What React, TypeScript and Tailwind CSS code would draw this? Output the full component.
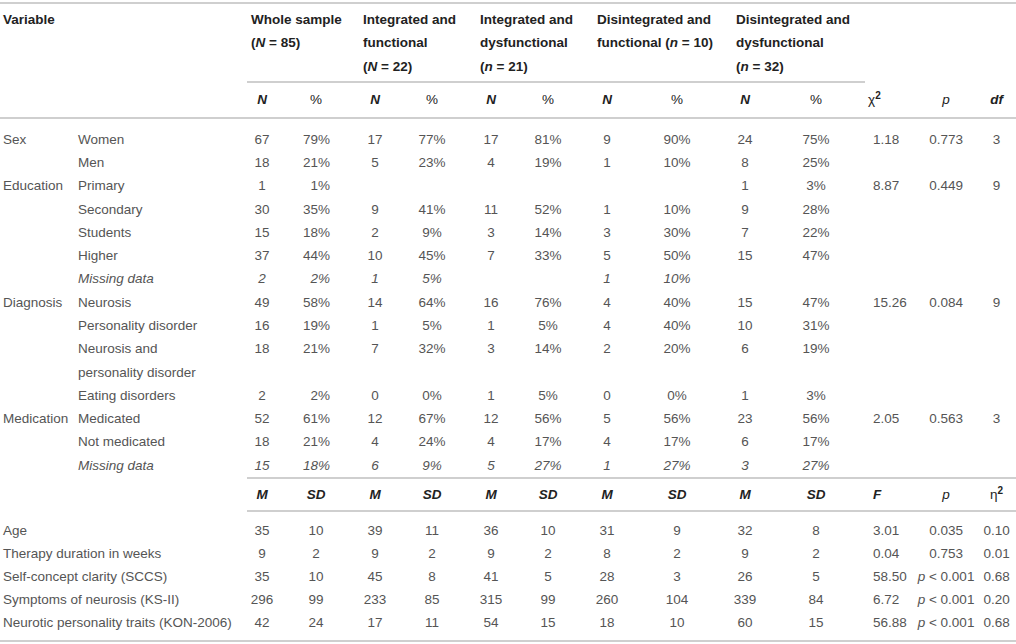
import React from "react";

type UpperRow = {
  group?: string;
  label: React.ReactNode;
  vals: string[];
  stats?: [string, string, string];
  italic?: boolean;
};

type LowerRow = {
  label: string;
  vals: string[];
  stats: [string, string, string];
};

const LT = "lt";

const upperRows: UpperRow[] = [
  { group: "Sex", label: "Women", vals: ["67", "79%", "17", "77%", "17", "81%", "9", "90%", "24", "75%"], stats: ["1.18", "0.773", "3"] },
  { label: "Men", vals: ["18", "21%", "5", "23%", "4", "19%", "1", "10%", "8", "25%"] },
  { group: "Education", label: "Primary", vals: ["1", "1%", "", "", "", "", "", "", "1", "3%"], stats: ["8.87", "0.449", "9"] },
  { label: "Secondary", vals: ["30", "35%", "9", "41%", "11", "52%", "1", "10%", "9", "28%"] },
  { label: "Students", vals: ["15", "18%", "2", "9%", "3", "14%", "3", "30%", "7", "22%"] },
  { label: "Higher", vals: ["37", "44%", "10", "45%", "7", "33%", "5", "50%", "15", "47%"] },
  { label: "Missing data", italic: true, vals: ["2", "2%", "1", "5%", "", "", "1", "10%", "", ""] },
  { group: "Diagnosis", label: "Neurosis", vals: ["49", "58%", "14", "64%", "16", "76%", "4", "40%", "15", "47%"], stats: ["15.26", "0.084", "9"] },
  { label: "Personality disorder", vals: ["16", "19%", "1", "5%", "1", "5%", "4", "40%", "10", "31%"] },
  {
    label: (
      <>
        Neurosis and
        <br />
        personality disorder
      </>
    ),
    vals: ["18", "21%", "7", "32%", "3", "14%", "2", "20%", "6", "19%"],
  },
  { label: "Eating disorders", vals: ["2", "2%", "0", "0%", "1", "5%", "0", "0%", "1", "3%"] },
  { group: "Medication", label: "Medicated", vals: ["52", "61%", "12", "67%", "12", "56%", "5", "56%", "23", "56%"], stats: ["2.05", "0.563", "3"] },
  { label: "Not medicated", vals: ["18", "21%", "4", "24%", "4", "17%", "4", "17%", "6", "17%"] },
  { label: "Missing data", italic: true, vals: ["15", "18%", "6", "9%", "5", "27%", "1", "27%", "3", "27%"] },
];

const lowerRows: LowerRow[] = [
  { label: "Age", vals: ["35", "10", "39", "11", "36", "10", "31", "9", "32", "8"], stats: ["3.01", "0.035", "0.10"] },
  { label: "Therapy duration in weeks", vals: ["9", "2", "9", "2", "9", "2", "8", "2", "9", "2"], stats: ["0.04", "0.753", "0.01"] },
  { label: "Self-concept clarity (SCCS)", vals: ["35", "10", "45", "8", "41", "5", "28", "3", "26", "5"], stats: ["58.50", LT, "0.68"] },
  { label: "Symptoms of neurosis (KS-II)", vals: ["296", "99", "233", "85", "315", "99", "260", "104", "339", "84"], stats: ["6.72", LT, "0.20"] },
  { label: "Neurotic personality traits (KON-2006)", vals: ["42", "24", "17", "11", "54", "15", "18", "10", "60", "15"], stats: ["56.88", LT, "0.68"] },
];

const colWidths = [75, 172, 30, 78, 40, 74, 44, 70, 48, 92, 44, 98, 50, 62, 39];

const rule = "border-[#cfcfcf]";

function PValue({ v }: { v: string }) {
  if (v === LT) {
    return (
      <>
        <i>p</i> &lt; 0.001
      </>
    );
  }
  return <>{v}</>;
}

export default function App() {
  return (
    <div className="min-h-screen bg-white pt-[2px] font-['Liberation_Sans',Arial,sans-serif] text-[13.5px] text-[#555]">
      <div className={`border-t-2 ${rule}`}>
        <table className="w-[1016px] table-fixed border-separate border-spacing-0">
          <colgroup>
            {colWidths.map((w, i) => (
              <col key={i} style={{ width: w }} />
            ))}
          </colgroup>
          <thead className="font-bold text-[#222]">
            {/* Group headings */}
            <tr className="leading-[23.4px]">
              <th colSpan={2} className="pl-[3px] pt-1 pb-[3px] text-left align-top">
                Variable
              </th>
              <th colSpan={2} className={`border-b-2 ${rule} pl-[4px] pt-1 pb-[3px] text-left align-top whitespace-nowrap`}>
                Whole sample
                <br />(<i>N</i> = 85)
              </th>
              <th colSpan={2} className={`border-b-2 ${rule} pl-[8px] pt-1 pb-[3px] text-left align-top whitespace-nowrap`}>
                Integrated and
                <br />
                functional
                <br />(<i>N</i> = 22)
              </th>
              <th colSpan={2} className={`border-b-2 ${rule} pl-[11px] pt-1 pb-[3px] text-left align-top whitespace-nowrap`}>
                Integrated and
                <br />
                dysfunctional
                <br />(<i>n</i> = 21)
              </th>
              <th colSpan={2} className={`border-b-2 ${rule} pl-[14px] pt-1 pb-[3px] text-left align-top whitespace-nowrap`}>
                Disintegrated and
                <br />
                functional (<i>n</i> = 10)
              </th>
              <th colSpan={2} className={`border-b-2 ${rule} pl-[13px] pt-1 pb-[3px] text-left align-top whitespace-nowrap`}>
                Disintegrated and
                <br />
                dysfunctional
                <br />(<i>n</i> = 32)
              </th>
              <th colSpan={3} />
            </tr>
            {/* N / % */}
            <tr className="leading-[23.4px]">
              <th colSpan={2} className={`border-b-2 ${rule} py-[5px]`} />
              {Array.from({ length: 5 }).map((_, i) => (
                <React.Fragment key={i}>
                  <th className={`border-b-2 ${rule} py-[5px] text-center italic`}>N</th>
                  <th className={`border-b-2 ${rule} py-[5px] text-center font-normal`}>%</th>
                </React.Fragment>
              ))}
              <th className={`border-b-2 ${rule} py-[5px] pl-[3px] text-left font-normal`}>
                χ<sup className="font-bold text-[10px]">2</sup>
              </th>
              <th className={`border-b-2 ${rule} py-[5px] text-center font-normal italic`}>p</th>
              <th className={`border-b-2 ${rule} py-[5px] text-center italic`}>df</th>
            </tr>
          </thead>
          <tbody className="leading-[23.3px]">
            {upperRows.map((r, ri) => {
              const pad = ri === 0 ? "pt-[9px]" : "";
              return (
                <tr key={ri} className={r.italic ? "italic" : ""}>
                  <td className={`pl-[3px] text-left align-top not-italic ${pad}`}>{r.group}</td>
                  <td className={`pl-[3px] text-left align-top ${pad}`}>{r.label}</td>
                  {r.vals.map((v, vi) => (
                    <td
                      key={vi}
                      className={`align-top ${pad} ${vi === 1 ? "pr-[25px] text-right" : "text-center"}`}
                    >
                      {v}
                    </td>
                  ))}
                  <td className={`pl-[8px] text-left align-top ${pad}`}>{r.stats?.[0]}</td>
                  <td className={`text-center align-top ${pad}`}>{r.stats?.[1]}</td>
                  <td className={`text-center align-top ${pad}`}>{r.stats?.[2]}</td>
                </tr>
              );
            })}
          </tbody>
          <tbody>
            {/* M / SD */}
            <tr className="leading-[23.4px] font-bold text-[#222]">
              <th colSpan={2} className="py-[4px]" />
              {Array.from({ length: 5 }).map((_, i) => (
                <React.Fragment key={i}>
                  <th className={`border-t-2 border-b-2 ${rule} py-[4px] text-center italic`}>M</th>
                  <th className={`border-t-2 border-b-2 ${rule} py-[4px] text-center italic`}>SD</th>
                </React.Fragment>
              ))}
              <th className={`border-t-2 border-b-2 ${rule} py-[4px] pl-[8px] text-left italic`}>F</th>
              <th className={`border-t-2 border-b-2 ${rule} py-[4px] text-center font-normal italic`}>p</th>
              <th className={`border-t-2 border-b-2 ${rule} py-[4px] text-center font-normal`}>
                η<sup className="font-bold text-[10px]">2</sup>
              </th>
            </tr>
          </tbody>
          <tbody className="leading-[23px]">
            {lowerRows.map((r, ri) => {
              const last = ri === lowerRows.length - 1;
              const pad = ri === 0 ? "pt-[7px]" : last ? `pb-[6px] border-b-2 ${rule}` : "";
              return (
                <tr key={ri}>
                  <td colSpan={2} className={`pl-[3px] text-left whitespace-nowrap ${pad}`}>
                    {r.label}
                  </td>
                  {r.vals.map((v, vi) => (
                    <td key={vi} className={`text-center ${pad}`}>
                      {v}
                    </td>
                  ))}
                  <td className={`pl-[8px] text-left ${pad}`}>{r.stats[0]}</td>
                  <td className={`text-center whitespace-nowrap ${pad}`}>
                    <PValue v={r.stats[1]} />
                  </td>
                  <td className={`text-center ${pad}`}>{r.stats[2]}</td>
                </tr>
              );
            })}
          </tbody>
        </table>
      </div>
    </div>
  );
}
